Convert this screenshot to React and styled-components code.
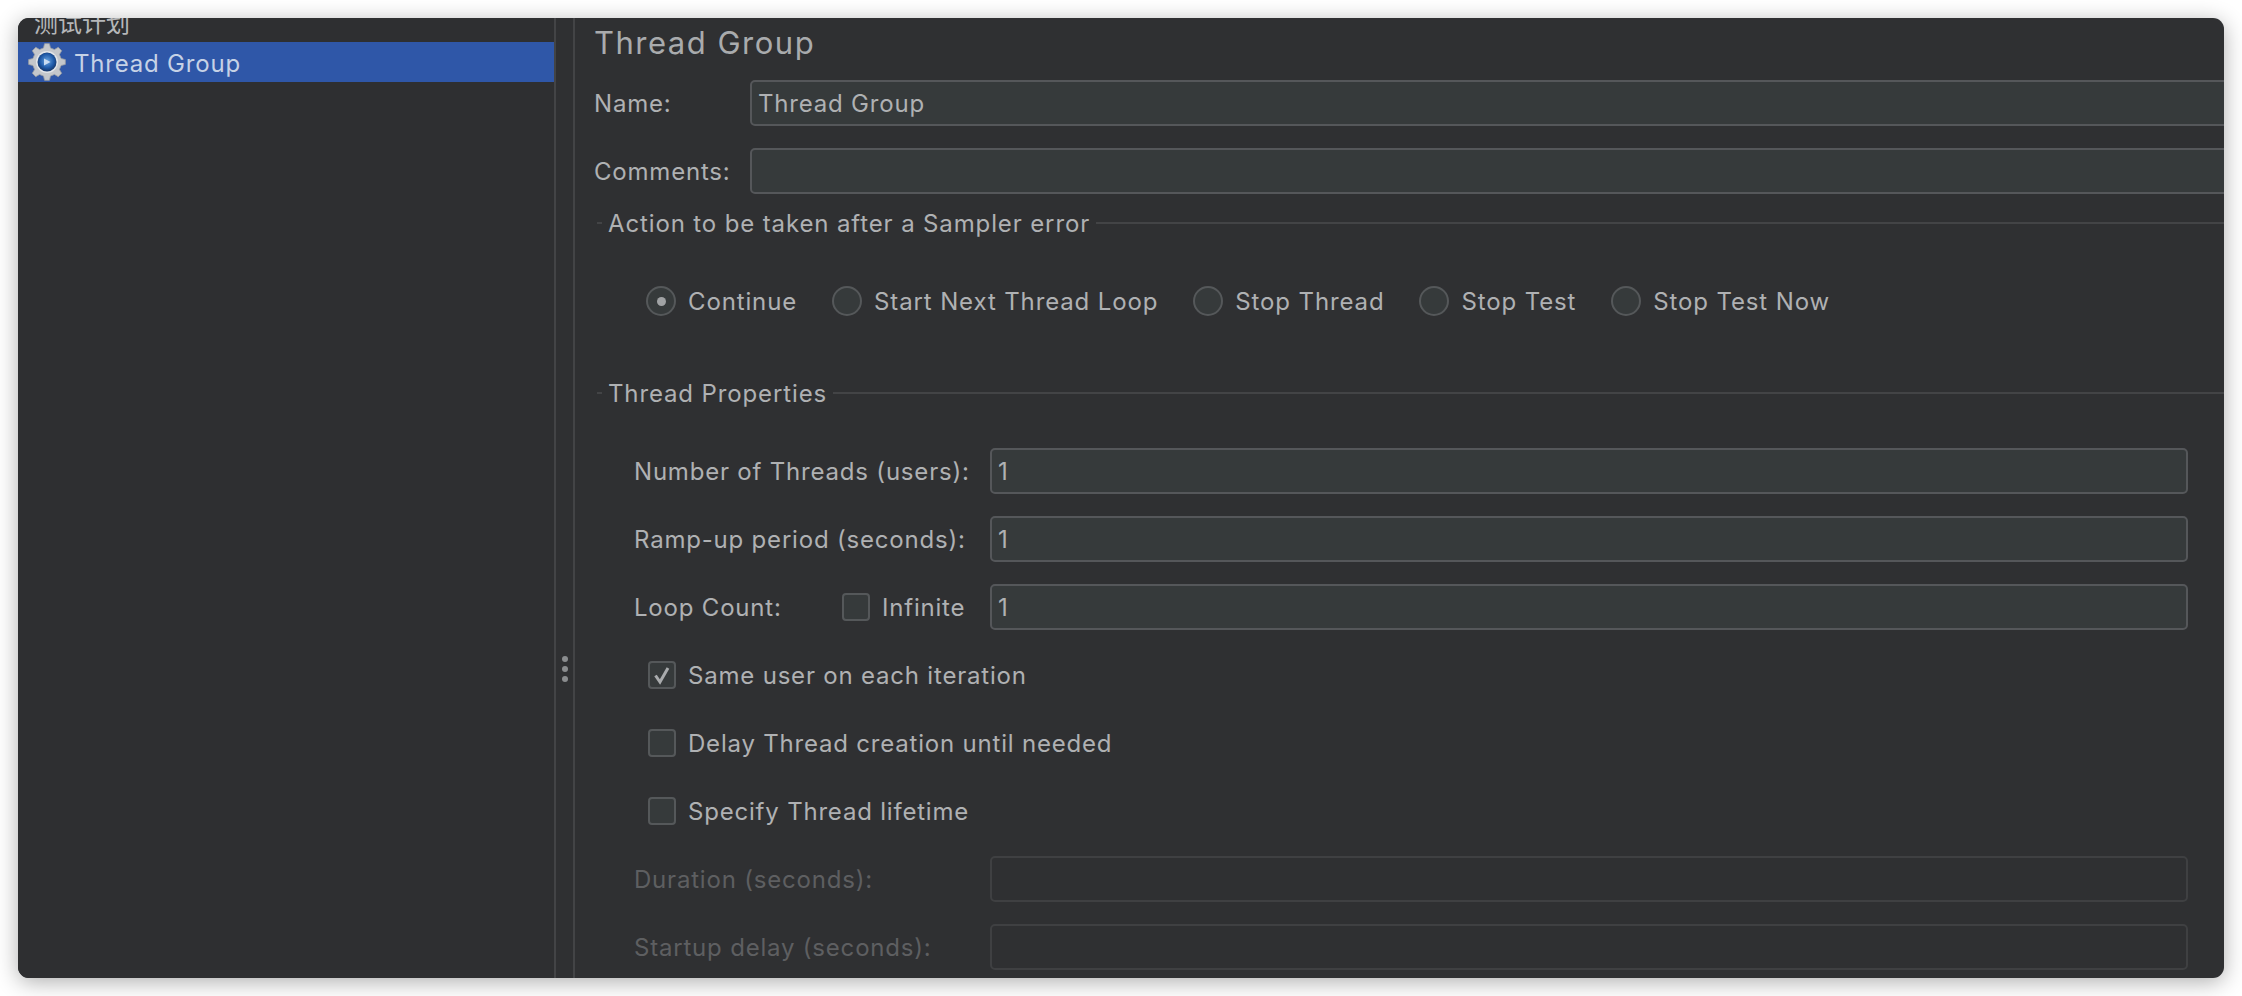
import React from "react";
import styled, { createGlobalStyle } from "styled-components";

const Global = createGlobalStyle`
  html, body { margin: 0; padding: 0; background: #fff; }
  #root { width: 2242px; height: 996px; overflow: hidden; }
  * { box-sizing: border-box; }
`;

const Page = styled.div`
  width: 2242px;
  height: 996px;
  padding: 18px;
  background: #fff;
  font-family: Inter, "Noto Sans CJK SC", sans-serif;
  font-size: 24px;
  letter-spacing: 0.8px;
  color: #afb1b3;
`;

const Window = styled.div`
  width: 2206px;
  height: 960px;
  display: flex;
  overflow: hidden;
  border-radius: 11px;
  background: #2f3032;
  box-shadow: 0 4px 22px rgba(0, 0, 0, 0.32);
`;

const Tree = styled.div`
  width: 536px;
  flex: none;
  background: #2e2f31;
`;

const TreeRoot = styled.div`
  height: 40px;
  margin-top: -16px;
  padding: 0 0 2px 16px;
  display: flex;
  align-items: center;
  font-size: 24px;
  letter-spacing: 0;
  color: #b5b7b9;
`;

const TreeRow = styled.div`
  height: 40px;
  padding-left: 10px;
  display: flex;
  align-items: center;
  gap: 8px;
  background: #2f57a8;
  color: #c6d2e6;
`;

const TreeLabel = styled.span`
  padding-top: 2px;
`;

const Splitter = styled.div`
  width: 21px;
  flex: none;
  padding-top: 342px;
  display: flex;
  flex-direction: column;
  align-items: center;
  justify-content: center;
  gap: 4px;
  border-left: 2px solid #434446;
  border-right: 2px solid #434446;
`;

const Dot = styled.span`
  width: 6px;
  height: 6px;
  border-radius: 50%;
  background: #8a8c8e;
`;

const Content = styled.div`
  flex: 1;
  min-width: 0;
  padding-left: 19px;
`;

const Heading = styled.h1`
  margin: 0;
  height: 62px;
  padding-bottom: 14px;
  display: flex;
  align-items: center;
  font-size: 31px;
  font-weight: 400;
  letter-spacing: 1.5px;
  color: #a9abad;
`;

const NameRow = styled.div`
  height: 46px;
  margin-bottom: ${(p) => (p.$last ? "17px" : "22px")};
  display: flex;
  align-items: center;
`;

const NameLabel = styled.span`
  width: 156px;
  flex: none;
`;

const Input = styled.div`
  flex: 1;
  min-width: 0;
  height: 46px;
  padding-left: 6px;
  display: flex;
  align-items: center;
  border: 2px solid ${(p) => (p.$disabled ? "#3f4042" : "#55575a")};
  border-radius: 5px;
  background: ${(p) => (p.$disabled ? "#2f3032" : "#363a3b")};
`;

const BleedInput = styled(Input)`
  margin-right: -12px;
`;

const Section = styled.section`
  margin-left: 3px;
`;

const Legend = styled.div`
  height: 24px;
  display: flex;
  align-items: center;
  gap: 6px;
  letter-spacing: 0.87px;
  &::before {
    content: "";
    width: 5px;
    height: 2px;
    background: #434446;
  }
  &::after {
    content: "";
    flex: 1;
    height: 2px;
    background: #434446;
  }
`;

const RadioBar = styled.div`
  height: 146px;
  padding: 0 0 14px 49px;
  display: flex;
  align-items: center;
  gap: 35px;
  letter-spacing: 0.87px;
`;

const Choice = styled.label`
  display: flex;
  align-items: center;
  gap: 12px;
`;

const RadioMark = styled.span`
  width: 30px;
  height: 30px;
  flex: none;
  display: flex;
  align-items: center;
  justify-content: center;
  border: 2px solid #55585a;
  border-radius: 50%;
  background: #363a3b;
  &::after {
    content: "";
    display: ${(p) => (p.$on ? "block" : "none")};
    width: 9px;
    height: 9px;
    border-radius: 50%;
    background: #a0a2a4;
  }
`;

const CheckMark = styled.span`
  width: 28px;
  height: 28px;
  flex: none;
  display: flex;
  align-items: center;
  justify-content: center;
  border: 2px solid #55585a;
  border-radius: 4px;
  background: #363a3b;
`;

const Rows = styled.div`
  padding: 43px 36px 0 37px;
  display: flex;
  flex-direction: column;
  gap: 22px;
`;

const Row = styled.div`
  height: 46px;
  display: flex;
  align-items: center;
`;

const RowLabel = styled.span`
  width: 356px;
  flex: none;
  display: flex;
  align-items: center;
  white-space: nowrap;
  color: ${(p) => (p.$disabled ? "#5e5f61" : "inherit")};
`;

const LoopText = styled.span`
  width: 208px;
  flex: none;
`;

const CheckRow = styled(Row)`
  padding-left: 14px;
`;

const gearPath = (() => {
  const teeth = 8;
  const cx = 19;
  const cy = 19;
  const pts = [];
  for (let i = 0; i < teeth; i += 1) {
    const a = (i / teeth) * Math.PI * 2 - Math.PI / 2;
    const step = (Math.PI * 2) / teeth;
    [
      [14.5, -0.5],
      [18.5, -0.27],
      [18.5, 0.27],
      [14.5, 0.5],
    ].forEach(([r, k]) => {
      const t = a + k * step * 0.62;
      pts.push(`${(cx + r * Math.cos(t)).toFixed(2)} ${(cy + r * Math.sin(t)).toFixed(2)}`);
    });
  }
  return `M${pts.join("L")}Z`;
})();

const GearIcon = () => (
  <svg width="38" height="38" viewBox="0 0 38 38" aria-hidden="true">
    <defs>
      <radialGradient id="hub" cx="50%" cy="45%" r="60%">
        <stop offset="0%" stopColor="#6aa6e2" />
        <stop offset="60%" stopColor="#1f5aa8" />
        <stop offset="100%" stopColor="#142c55" />
      </radialGradient>
    </defs>
    <path d={gearPath} fill="#c4c7cb" stroke="#9a9ea3" strokeWidth="0.8" strokeLinejoin="round" />
    <circle cx="19" cy="19" r="11" fill="#e2e5e9" />
    <circle cx="19" cy="19" r="9.500" fill="url(#hub)" />
    <path d="M16 15.500l6.500 3.500-6.500 3.500z" fill="#c8dcf2" />
  </svg>
);

const Tick = () => (
  <svg width="20" height="20" viewBox="0 0 20 20" aria-hidden="true">
    <path d="M3.500 10.500l4.500 6.500L16 3" fill="none" stroke="#a9abad" strokeWidth="3" />
  </svg>
);

const choices = ["Continue", "Start Next Thread Loop", "Stop Thread", "Stop Test", "Stop Test Now"];

export default function App() {
  return (
    <Page>
      <Global />
      <Window>
        <Tree>
          <TreeRoot>测试计划</TreeRoot>
          <TreeRow>
            <GearIcon />
            <TreeLabel>Thread Group</TreeLabel>
          </TreeRow>
        </Tree>
        <Splitter>
          <Dot />
          <Dot />
          <Dot />
        </Splitter>
        <Content>
          <Heading>Thread Group</Heading>
          <NameRow>
            <NameLabel>Name:</NameLabel>
            <BleedInput>Thread Group</BleedInput>
          </NameRow>
          <NameRow $last>
            <NameLabel>Comments:</NameLabel>
            <BleedInput />
          </NameRow>
          <Section>
            <Legend>Action to be taken after a Sampler error</Legend>
            <RadioBar>
              {choices.map((c, i) => (
                <Choice key={c}>
                  <RadioMark $on={i === 0} />
                  {c}
                </Choice>
              ))}
            </RadioBar>
          </Section>
          <Section>
            <Legend>Thread Properties</Legend>
            <Rows>
              <Row>
                <RowLabel>Number of Threads (users):</RowLabel>
                <Input>1</Input>
              </Row>
              <Row>
                <RowLabel>Ramp-up period (seconds):</RowLabel>
                <Input>1</Input>
              </Row>
              <Row>
                <RowLabel>
                  <LoopText>Loop Count:</LoopText>
                  <Choice>
                    <CheckMark />
                    Infinite
                  </Choice>
                </RowLabel>
                <Input>1</Input>
              </Row>
              <CheckRow>
                <Choice>
                  <CheckMark>
                    <Tick />
                  </CheckMark>
                  Same user on each iteration
                </Choice>
              </CheckRow>
              <CheckRow>
                <Choice>
                  <CheckMark />
                  Delay Thread creation until needed
                </Choice>
              </CheckRow>
              <CheckRow>
                <Choice>
                  <CheckMark />
                  Specify Thread lifetime
                </Choice>
              </CheckRow>
              <Row>
                <RowLabel $disabled>Duration (seconds):</RowLabel>
                <Input $disabled />
              </Row>
              <Row>
                <RowLabel $disabled>Startup delay (seconds):</RowLabel>
                <Input $disabled />
              </Row>
            </Rows>
          </Section>
        </Content>
      </Window>
    </Page>
  );
}
